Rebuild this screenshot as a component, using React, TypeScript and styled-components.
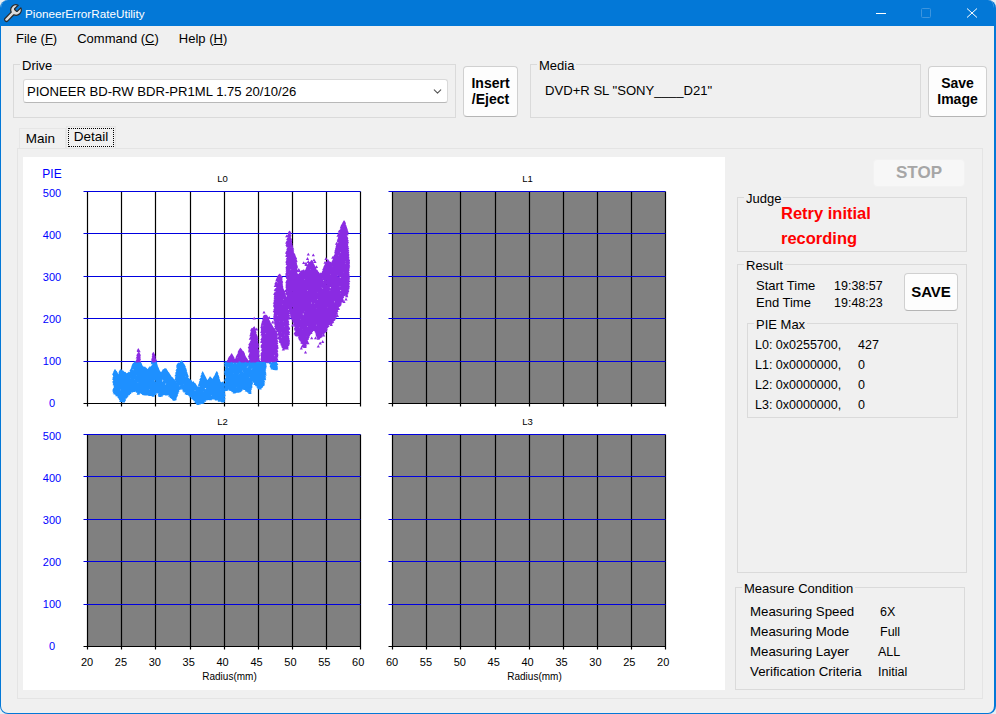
import React, { useMemo } from "react";
import styled, { createGlobalStyle } from "styled-components";
import { ChevronDown } from "lucide-react";

const Global = createGlobalStyle`
  html, body { margin: 0; padding: 0; background: #e8eef2; }
  * { box-sizing: border-box; }
  body { font-family: "Liberation Sans", Arial, sans-serif; font-size: 13px; color: #000; }
`;

const Win = styled.div`
  width: 996px; height: 714px; overflow: hidden;
  display: flex; flex-direction: column;
  background: #f0f0f0;
  border: 1px solid #0378d7; border-top: 0; border-right-width: 2px;
  border-radius: 8px 8px 8px 8px;
`;
const TitleBar = styled.div`
  height: 26px; flex: none; background: #0378d7; color: #fff;
  display: flex; align-items: center; margin: 0 -2px 0 -1px; padding-left: 2px;
  font-size: 11.7px; position: relative;
`;
const TitleText = styled.span` margin-left: 2px; `;
const WinCtl = styled.svg`
  position: absolute; top: 7px; width: 12px; height: 12px;
  left: ${(p: { $x: number }) => p.$x}px;
`;
const Menu = styled.div`
  height: 24px; flex: none; display: flex; align-items: center; gap: 20px; padding-left: 15px; font-size: 13px;
`;
const TopRow = styled.div`
  display: flex; align-items: flex-start; margin-top: 7px; padding-left: 12px; height: 61px; flex: none;
`;
const Group = styled.fieldset<{ $w: number; $h: number }>`
  margin: 0; padding: 0; min-width: 0;
  width: ${(p) => p.$w}px; height: ${(p) => p.$h}px; flex: none;
  border: 1px solid #dadada;
`;
const Legend = styled.legend`
  padding: 2px 2px 0; margin-left: 6px; line-height: 13px; font-size: 13px;
`;
const Select = styled.div`
  margin: 7px 0 0 9px; width: 425px; height: 24px; background: #fff;
  border: 1px solid #d9d9d9; border-bottom-color: #b8b8b8; border-radius: 3px;
  display: flex; align-items: center; justify-content: space-between; padding: 0 3px;
  font-size: 13.1px;
`;
const Btn = styled.button<{ $w: number; $h: number; $l?: number; $t?: number; $fs?: number; $pb?: number }>`
  width: ${(p) => p.$w}px; height: ${(p) => p.$h}px; flex: none;
  margin: ${(p) => p.$t ?? 0}px 0 0 ${(p) => p.$l ?? 0}px; padding: 0 0 ${(p) => p.$pb ?? 0}px 0;
  background: #fdfdfd; border: 1px solid #d0d0d0; border-bottom-color: #b5b5b5; border-radius: 4px;
  font: bold ${(p) => p.$fs ?? 14}px/16px "Liberation Sans", Arial, sans-serif; color: #000;
  &:disabled { background: #f7f7f7; border-color: #f2f2f2; color: #a6a6a6; }
`;
const MediaSlot = styled(Group)` margin-left: 12px; `;
const MediaText = styled.div` margin: 11px 0 0 14px; font-size: 13.1px; `;
const Tabs = styled.div`
  display: flex; align-items: flex-end; height: 22px; flex: none; margin-top: 8px; padding-left: 18px;
`;
const Tab = styled.div`
  height: 20px; width: 47px; padding-right: 4px;
  border: 1px solid #e6e6e6; border-bottom: 0;
  font-size: 13.5px; display: flex; align-items: center; justify-content: center;
`;
const ActiveTab = styled(Tab)`
  height: 22px; width: 50px; padding: 1px 1px 1px 1px;
`;
const Focus = styled.span`
  display: flex; align-items: center; justify-content: center;
  width: 100%; height: 100%; padding-bottom: 2px; border: 1px dotted #000;
`;
const Panel = styled.div`
  margin-left: 16px; width: 966px; height: 551px; flex: none;
  border: 1px solid #e4e4e4; padding: 8px 0 0 5px;
  display: flex; gap: 12px; background: #f0f0f0;
`;
const Charts = styled.div`
  width: 702px; height: 533px; background: #fff; flex: none;
  display: grid; grid-template-columns: 352px 350px; grid-template-rows: 253px 280px;
`;
const ChartSvg = styled.svg` display: block; font-family: "Liberation Sans", Arial, sans-serif; `;
const Side = styled.div` width: 232px; flex: none; display: flex; flex-direction: column; `;
const Judge = styled(Group)` margin: 3px 0 0 0; `;
const Red = styled.div`
  margin: -4px 0 0 43px; color: #ff0000; font-weight: bold; font-size: 16.5px; line-height: 25px;
`;
const Result = styled(Group)` margin: 5px 0 0 0; `;
const ResultTop = styled.div` display: flex; align-items: flex-start; `;
const Times = styled.div`
  display: grid; grid-template-columns: 78px auto; grid-auto-rows: 17px; align-items: baseline;
  margin: 6px 0 0 18px; width: 148px; font-size: 12.5px;
`;
const TimeLabel = styled.span` font-size: 13px; `;
const PieBox = styled(Group)` margin: 4px 0 0 9px; `;
const PieRows = styled.div`
  display: grid; grid-template-columns: 103px auto; grid-auto-rows: 20px; align-items: center;
  margin: 4px 0 0 7px; font-size: 12.5px;
`;
const Measure = styled(Group)` margin: 7px 0 0 -2px; `;
const MeasureRows = styled.div`
  display: grid; grid-template-columns: 130px auto; grid-auto-rows: 20px; align-items: baseline;
  margin: 9px 0 0 14px; font-size: 12.5px;
`;
const MeasureLabel = styled.span` font-size: 13.3px; `;
const MeasureValue = styled.span<{ $nudge: number }>` margin-left: ${(p) => p.$nudge}px; `;

type Lobe = number[][];
const lobes: Lobe[] = [
  [[281,640,690],[285,630,700],[295,650,705],[303,630,720],[310,640,722],[320,645,705],[330,640,695],[340,615,690],[350,605,690],[355,570,700],[360,610,695],[370,625,700],[385,630,700],[395,620,705],[400,580,705],[410,620,690],[420,640,705],[437,630,700],[450,650,705],[465,665,720],[473,615,690],[485,607,680],[495,625,695],[505,660,700],[520,670,715],[535,685,730],[548,640,725],[560,665,715],[570,655,715],[580,660,715],[590,640,715],[600,670,720],[612,670,722]],
  [[616,610,690],[625,600,680],[635,585,690],[645,605,695],[660,568,690],[670,580,680],[680,600,690],[690,620,697],[696,640,650],[702,610,665],[718,610,685],[730,610,670],[736,600,640]],
  [[688,560,610],[695,510,620],[703,505,620],[710,530,610],[715,590,606]],
  [[725,500,603],[732,470,603],[740,470,603],[750,490,606],[755,500,622],[768,520,625],[771,560,600]],
  [[763,430,470],[766,375,490],[775,350,520],[780,345,540],[790,400,560],[800,420,565],[806,440,545]],
  [[800,250,420],[808,215,440],[815,265,470],[825,290,490],[832,340,500]],
  [[825,345,520],[835,350,525],[845,335,545],[855,335,560],[865,315,525],[875,305,510],[885,325,505],[895,340,535],[905,345,525],[915,315,510],[925,305,490],[935,315,485],[945,285,470],[955,240,440],[965,200,420],[972,185,400],[980,210,405],[985,300,380]],
];
const outliers = [[865,283],[880,285],[858,310],[810,217],[778,345],[732,457],[865,305],[882,300],[920,308],[705,508],[852,558],[900,550],[790,568]];

function buildPaths() {
  let a = 20231;
  const rnd = () => {
    a = (a + 0x6d2b79f5) | 0;
    let t = Math.imul(a ^ (a >>> 15), 1 | a);
    t = (t + Math.imul(t ^ (t >>> 7), 61 | t)) ^ t;
    return ((t ^ (t >>> 14)) >>> 0) / 4294967296;
  };
  const blue: string[] = [];
  const purple: string[] = [];
  const add = (zx: number, zy: number) => {
    const x = zx / 3 - 3, y = zy / 3 + 3;
    const t = `M${(x - 1.6).toFixed(1)} ${(y + 1.2).toFixed(1)}h3.2L${x.toFixed(1)} ${(y - 1.6).toFixed(1)}z`;
    (zy < 604 ? purple : blue).push(t);
  };
  for (const l of lobes) {
    for (let i = 0; i < l.length - 1; i++) {
      const [x0, t0, b0] = l[i];
      const [x1, t1, b1] = l[i + 1];
      for (let x = x0; x < x1; x += 1.5) {
        const k = (x - x0) / (x1 - x0);
        const top = t0 + (t1 - t0) * k + rnd() * 6 - 3;
        const bot = b0 + (b1 - b0) * k + rnd() * 6 - 3;
        add(x, top);
        add(x, bot);
        const span = bot - top;
        if (top < 560 && rnd() < 0.12) add(x, top - rnd() * 28);
        if (bot < 600 && rnd() < 0.12) add(x, bot + rnd() * 28);
        const count = Math.ceil(span / 5);
        for (let n = 0; n < count; n++) add(x + rnd() * 2, top + span * rnd());
      }
    }
  }
  for (const [x, y] of outliers) add(x, y);
  return { blue: blue.join(""), purple: purple.join("") };
}

const ys = [500, 400, 300, 200, 100, 0];
const H = [0, 41.5, 84.5, 126.5, 169.5, 212];
const V = [0, 34, 68, 102.5, 136.5, 170.5, 204.5, 238.5, 272.5];

function Chart({ title, left, bottom, data }: { title: string; left: boolean; bottom: boolean; data?: { blue: string; purple: string } }) {
  const x0 = left ? 64.5 : 17.5;
  const y0 = bottom ? 24.5 : 34.5;
  const w = left ? 352 : 350;
  const h = bottom ? 280 : 253;
  const xs = left ? [20, 25, 30, 35, 40, 45, 50, 55, 60] : [60, 55, 50, 45, 40, 35, 30, 25, 20];
  return (
    <ChartSvg width={w} height={h} viewBox={`0 0 ${w} ${h}`}>
      {!data && <rect x={x0} y={y0} width={272.5} height={212} fill="#808080" />}
      {left && !bottom && <text x={29} y={21} textAnchor="middle" fontSize={12} fill="#0000ff">PIE</text>}
      <text x={x0 + 135} y={y0 - 10} textAnchor="middle" fontSize={9.5} fill="#000">{title}</text>
      {V.map((v) => (
        <line key={v} x1={Math.floor(x0 + v) + 0.5} x2={Math.floor(x0 + v) + 0.5} y1={y0} y2={y0 + 215} stroke="#000" strokeWidth={1.2} />
      ))}
      {H.map((v, i) => (
        <line key={v} x1={x0 - 4} x2={x0 + 273} y1={Math.floor(y0 + v) + 0.5} y2={Math.floor(y0 + v) + 0.5} stroke={i === 5 ? "#000" : "#0000e0"} strokeWidth={1.2} />
      ))}
      {data && <path d={data.blue} fill="#1e90ff" />}
      {data && <path d={data.purple} fill="#8a2be2" />}
      {left && ys.map((v, i) => (
        <text key={v} x={29} y={y0 + 5.3 + i * 42} textAnchor="middle" fontSize={11} fill="#0000ff">{v}</text>
      ))}
      {bottom && xs.map((v, i) => (
        <text key={i} x={x0 - 0.5 + i * 33.9} y={y0 + 231} textAnchor="middle" fontSize={11} fill="#000">{v}</text>
      ))}
      {bottom && <text x={x0 + 142} y={y0 + 245} textAnchor="middle" fontSize={10} fill="#000">Radius(mm)</text>}
    </ChartSvg>
  );
}

const U = styled.span` text-decoration: underline; `;

export default function App() {
  const data = useMemo(buildPaths, []);
  return (
    <Win>
      <Global />
      <TitleBar>
        <svg width="21" height="21" viewBox="0 0 24 24">
          <path d="M14.7 6.3a1 1 0 0 0 0 1.4l1.6 1.6a1 1 0 0 0 1.4 0l3.77-3.77a6 6 0 0 1-7.94 7.94l-6.91 6.91a2.12 2.12 0 0 1-3-3l6.91-6.91a6 6 0 0 1 7.94-7.94l-3.76 3.76z" fill="#dcdcdc" stroke="#2a2a2a" strokeWidth="1.4" strokeLinejoin="round" />
        </svg>
        <TitleText>PioneerErrorRateUtility</TitleText>
        <WinCtl $x={875} viewBox="0 0 12 12"><line x1="1" x2="11" y1="6.5" y2="6.5" stroke="#fff" /></WinCtl>
        <WinCtl $x={920} viewBox="0 0 12 12"><rect x="1.5" y="1.5" width="9" height="9" rx="1" fill="none" stroke="#3d95de" /></WinCtl>
        <WinCtl $x={966} viewBox="0 0 12 12"><path d="M1 1.5l10 9M11 1.5l-10 9" stroke="#fff" fill="none" /></WinCtl>
      </TitleBar>
      <Menu>
        <span>File (<U>F</U>)</span>
        <span>Command (<U>C</U>)</span>
        <span>Help (<U>H</U>)</span>
      </Menu>
      <TopRow>
        <Group $w={443} $h={61}>
          <Legend>Drive</Legend>
          <Select>
            <span>PIONEER BD-RW BDR-PR1ML 1.75 20/10/26</span>
            <ChevronDown size={13} color="#555" />
          </Select>
        </Group>
        <Btn $w={55} $h={51} $l={7} $t={9} $pb={2}>Insert<br />/Eject</Btn>
        <MediaSlot $w={391} $h={61}>
          <Legend>Media</Legend>
          <MediaText>DVD+R SL "SONY____D21"</MediaText>
        </MediaSlot>
        <Btn $w={59} $h={51} $l={7} $t={9} $pb={2}>Save<br />Image</Btn>
      </TopRow>
      <Tabs>
        <Tab>Main</Tab>
        <ActiveTab><Focus>Detail</Focus></ActiveTab>
      </Tabs>
      <Panel>
        <Charts>
          <Chart title="L0" left bottom={false} data={data} />
          <Chart title="L1" left={false} bottom={false} />
          <Chart title="L2" left bottom />
          <Chart title="L3" left={false} bottom />
        </Charts>
        <Side>
          <Btn $w={92} $h={28} $l={136} $t={2} $fs={17} disabled>STOP</Btn>
          <Judge $w={230} $h={62}>
            <Legend>Judge</Legend>
            <Red>Retry initial<br />recording</Red>
          </Judge>
          <Result $w={230} $h={316}>
            <Legend>Result</Legend>
            <ResultTop>
              <Times>
                <TimeLabel>Start Time</TimeLabel><span>19:38:57</span>
                <TimeLabel>End Time</TimeLabel><span>19:48:23</span>
              </Times>
              <Btn $w={54} $h={38} $l={0} $t={1} $fs={15}>SAVE</Btn>
            </ResultTop>
            <PieBox $w={211} $h={102}>
              <Legend>PIE Max</Legend>
              <PieRows>
                <span>L0: 0x0255700,</span><span>427</span>
                <span>L1: 0x0000000,</span><span>0</span>
                <span>L2: 0x0000000,</span><span>0</span>
                <span>L3: 0x0000000,</span><span>0</span>
              </PieRows>
            </PieBox>
          </Result>
          <Measure $w={230} $h={110}>
            <Legend>Measure Condition</Legend>
            <MeasureRows>
              <MeasureLabel>Measuring Speed</MeasureLabel><MeasureValue $nudge={0}>6X</MeasureValue>
              <MeasureLabel>Measuring Mode</MeasureLabel><MeasureValue $nudge={0}>Full</MeasureValue>
              <MeasureLabel>Measuring Layer</MeasureLabel><MeasureValue $nudge={-2}>ALL</MeasureValue>
              <MeasureLabel>Verification Criteria</MeasureLabel><MeasureValue $nudge={-2}>Initial</MeasureValue>
            </MeasureRows>
          </Measure>
        </Side>
      </Panel>
    </Win>
  );
}
